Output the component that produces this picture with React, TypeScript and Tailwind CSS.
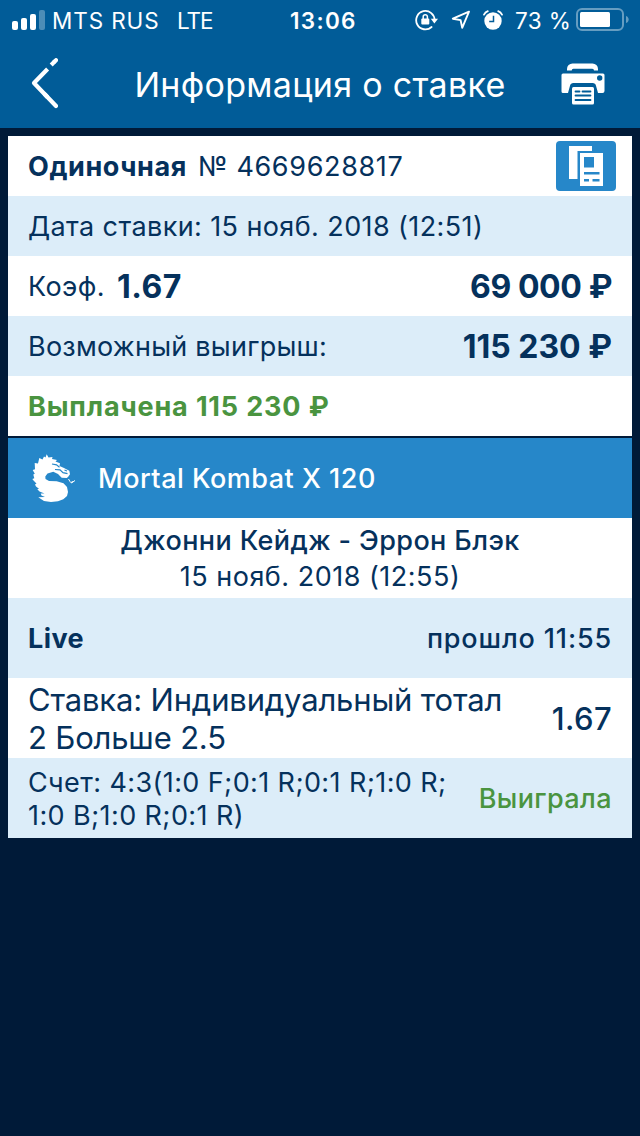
import React from 'react';

interface IconProps {
  className?: string;
}

const SignalIcon: React.FC<IconProps> = ({ className }) => (
  <svg className={className} viewBox="0 0 34 22" fill="currentColor">
    <rect x="0" y="12" width="6" height="9" rx="2" />
    <rect x="9" y="9" width="6" height="12" rx="2" />
    <rect x="18" y="5" width="6" height="16" rx="2" />
    <rect x="27" y="1" width="6" height="20" rx="2" opacity="0.3" />
  </svg>
);

const RotationLockIcon: React.FC<IconProps> = ({ className }) => (
  <svg className={className} viewBox="0 0 24 22" fill="none">
    <path d="M19.6 11.5A9.2 9.2 0 1 0 16.6 18" stroke="currentColor" strokeWidth="1.8" strokeLinecap="round" />
    <path d="M15.8 9.8h7.2l-3.6 4.6z" fill="currentColor" />
    <path d="M8.2 10V7.8a2.1 2.1 0 0 1 4.2 0V10" stroke="currentColor" strokeWidth="1.5" />
    <rect x="6.3" y="9.4" width="8" height="6" rx="1" fill="currentColor" />
  </svg>
);

const LocationIcon: React.FC<IconProps> = ({ className }) => (
  <svg className={className} viewBox="0 0 20 20" fill="none">
    <path d="M18 1.6L1.8 8.7L9.6 10.1L11.2 17.8z" stroke="currentColor" strokeWidth="1.9" strokeLinejoin="round" />
  </svg>
);

const AlarmIcon: React.FC<IconProps> = ({ className }) => (
  <svg className={className} viewBox="0 0 20 20" fill="none">
    <circle cx="10" cy="11" r="8.7" fill="currentColor" />
    <path d="M1 4.6A7 7 0 0 1 4.8 1.2M19 4.6A7 7 0 0 0 15.2 1.2" stroke="currentColor" strokeWidth="1.8" strokeLinecap="round" />
    <path d="M10.5 5.8v5.6H6.2" stroke="#015c98" strokeWidth="1.5" />
  </svg>
);

const BatteryIcon: React.FC<IconProps> = ({ className }) => (
  <svg className={className} viewBox="0 0 54 24" fill="none">
    <rect x="1" y="1" width="46" height="21" rx="5" stroke="currentColor" strokeWidth="2" opacity="0.4" />
    <rect x="4" y="4" width="30" height="15" rx="1.5" fill="currentColor" />
    <path d="M50 8c3.6 1 3.6 6 0 7z" fill="currentColor" opacity="0.4" />
  </svg>
);

const BackIcon: React.FC<IconProps> = ({ className }) => (
  <svg className={className} viewBox="0 0 28 52" fill="none" stroke="currentColor" strokeWidth="4.2" strokeLinejoin="round">
    <path d="M17.6 11L4 25L17.600 39.200" />
    <path d="M15 36.500L26 48" strokeLinecap="round" />
    <path d="M21.200 7L24.500 3.600" />
    <path d="M24.500 3.600L26 2.200" strokeLinecap="round" />
  </svg>
);

const PrinterIcon: React.FC<IconProps> = ({ className }) => (
  <svg className={className} viewBox="0 0 44 42" fill="none">
    <path d="M6 7.500V6a5.500 5.500 0 0 1 5.500-5.500h20A5.500 5.500 0 0 1 37 6v1.500h-4a1.700 1.700 0 0 0-1.700-1.700H12.400a1.700 1.700 0 0 0-1.700 1.700z" fill="currentColor" />
    <path d="M2 10.500h40a1.500 1.500 0 0 1 1.500 1.500v16a2 2 0 0 1-2 2H37l-2-7.300a3.500 3.500 0 0 0-3.400-2.700H12.400A3.500 3.500 0 0 0 9 22.700L7 30H2a1.500 1.500 0 0 1-1.500-1.500V12A1.500 1.500 0 0 1 2 10.500z" fill="currentColor" />
    <circle cx="38.700" cy="15" r="2.700" fill="#015c98" />
    <rect x="11" y="24" width="22" height="17.500" rx="1.500" fill="currentColor" />
    <path d="M14.500 28.500h4M21.500 28.500h8M14.500 32.500h15M14.500 37h15" stroke="#015c98" strokeWidth="1.800" strokeLinecap="round" />
  </svg>
);

const CouponIcon: React.FC<IconProps> = ({ className }) => (
  <svg className={className} viewBox="0 0 60 50" fill="none">
    <path d="M13 5h23v5H21.500v28H13z" fill="#fff" />
    <path d="M24 12h23v33H24z" fill="#fff" />
    <path d="M28 16h10v10.500H28zM28 31h15.500v2.500H28zM28 38h5v2.500h-5zM36.500 38h7v2.500h-7z" fill="#2687c9" />
  </svg>
);

const DragonIcon: React.FC<IconProps> = ({ className }) => (
  <svg className={className} viewBox="0 0 44 48">
    <path
      d="M14.700.3L16.500 3.400L20.500 3L20 5L25 6L23.500 7.500L28 9.300L27.500 12L32 14L37.300 16.700L38 20.300L36 23L34.700 24L29.700 23.700L26 20L21.300 17.700L15.500 19.500L13.300 22.500L13.500 25L17 27L24.700 27.300L31.500 29.200L35 33L36 38L35 42L31.300 45.300L26 47.300L19 47.900L12 47L6.300 43.300L13 43L9.500 41.500L8.700 39.500L12.500 39.500L7.500 37.500L5.300 35.300L7 34.700L4 32.500L3 30.500L4.500 29.500L1.500 26.500L.3 25L2.300 24.300L1.300 20.500L2.800 19.800L.7 16L3 15.300L2.700 9L6 9.500L7.300 4L10.500 5.500L12 2.500L13.500 3.500z"
      fill="#fff"
    />
    <path d="M20 10l4.500.8 3 2.400M23 15.500l5 .4 3 2.800 4.500 1M32.500 16l2.500 1" stroke="#2687c9" strokeWidth="1.200" fill="none" />
    <path d="M36.500 25l1.500 2.500 1.500 1.500 3.500-2.500M39.500 29l1-2" stroke="#fff" strokeWidth="1" fill="none" />
  </svg>
);

const StatusBar: React.FC = () => (
  <div className="flex h-10 items-center pl-3 pr-[10px] text-[22.500px]">
    <SignalIcon className="h-[22px] w-[34px]" />
    <span className="ml-[6px] w-[125px] whitespace-nowrap pt-0.5 tracking-[0.900px]">MTS RUS</span>
    <span className="w-[113px] pt-0.5 tracking-[-1px]">LTE</span>
    <span className="w-[125px] pt-0.5 font-semibold tracking-[1.300px]">13:06</span>
    <RotationLockIcon className="h-[22px] w-6 shrink-0" />
    <LocationIcon className="ml-[12px] h-5 w-5 shrink-0" />
    <AlarmIcon className="ml-[12px] h-5 w-5 shrink-0" />
    <span className="ml-[12px] w-[61px] whitespace-nowrap pt-0.5">73 %</span>
    <BatteryIcon className="h-6 w-[54px] shrink-0" />
  </div>
);

const Header: React.FC = () => (
  <header className="h-32 bg-[#015c98] text-white">
    <StatusBar />
    <div className="flex h-[88px] items-center justify-between pl-[30px] pr-[35px]">
      <BackIcon className="h-[52px] w-7" />
      <h1 className="ml-[21px] whitespace-nowrap text-[34px] tracking-[0.300px]">Информация о ставке</h1>
      <PrinterIcon className="h-[42px] w-11" />
    </div>
  </header>
);

interface RowProps {
  className: string;
  children: React.ReactNode;
}

const Row: React.FC<RowProps> = ({ className, children }) => (
  <div className={`flex items-center justify-between whitespace-nowrap pl-5 pr-5 ${className}`}>{children}</div>
);

const App: React.FC = () => {
  return (
    <div className="min-h-[1136px] w-[640px] bg-[#001a38] font-['Inter','Noto_Sans',sans-serif] text-[27px] tracking-[0.400px] text-[#05315c]">
      <Header />

      <main className="px-2 pt-2">
        {/* Bet summary */}
        <section>
          <Row className="h-[60px] bg-white">
            <div className="flex gap-[11px] pt-0.5">
              <span className="font-bold tracking-[0.600px]">Одиночная</span>
              <span className="tracking-[0.650px]">№ 4669628817</span>
            </div>
            <button className="-mr-1 rounded-[4px] bg-[#2687c9]">
              <CouponIcon className="h-[50px] w-[60px]" />
            </button>
          </Row>
          <Row className="h-[60px] bg-[#dcedf9] pt-0.5">
            <span>Дата ставки: 15 нояб. 2018 (12:51)</span>
          </Row>
          <Row className="h-[60px] bg-white pt-0.5">
            <div className="flex items-center gap-3">
              <span>Коэф.</span>
              <span className="text-[32px] font-bold tracking-[0.500px]">1.67</span>
            </div>
            <span className="text-[32px] font-bold tracking-[-0.400px]">69 000 ₽</span>
          </Row>
          <Row className="h-[60px] bg-[#dcedf9] pt-0.5">
            <span className="tracking-[0.250px]">Возможный выигрыш:</span>
            <span className="text-[32px] font-bold tracking-normal">115 230 ₽</span>
          </Row>
          <Row className="h-[60px] bg-white pt-0.5 font-bold tracking-[0.850px] text-[#4a9440]">
            <span>Выплачена 115 230 ₽</span>
          </Row>
        </section>

        {/* Event details */}
        <section className="mt-0.5">
          <div className="flex h-20 items-center gap-[22px] bg-[#2687c9] pl-6 font-medium text-white">
            <DragonIcon className="h-12 w-11" />
            <span className="pt-0.5 tracking-[0.500px]">Mortal Kombat X 120</span>
          </div>
          <div className="flex h-20 flex-col items-center bg-white pt-[5px] leading-9">
            <span className="font-medium">Джонни Кейдж - Эррон Блэк</span>
            <span className="tracking-[0.500px]">15 нояб. 2018 (12:55)</span>
          </div>
          <Row className="h-20 bg-[#dcedf9] pt-0.5">
            <span className="font-bold">Live</span>
            <span className="font-medium tracking-[0.850px]">прошло 11:55</span>
          </Row>
          <Row className="h-20 bg-white pt-0.5">
            <p className="text-[31px] leading-[38px] tracking-[-0.170px]">
              Ставка: Индивидуальный тотал
              <br />
              2 Больше 2.5
            </p>
            <span className="text-[31px] font-medium">1.67</span>
          </Row>
          <Row className="h-20 bg-[#dcedf9] pt-0.5">
            <p className="leading-[33px]">
              Счет: 4:3(1:0 F;0:1 R;0:1 R;1:0 R;
              <br />
              1:0 B;1:0 R;0:1 R)
            </p>
            <span className="font-medium text-[#4a9440]">Выиграла</span>
          </Row>
        </section>
      </main>
    </div>
  );
};

export default App;
